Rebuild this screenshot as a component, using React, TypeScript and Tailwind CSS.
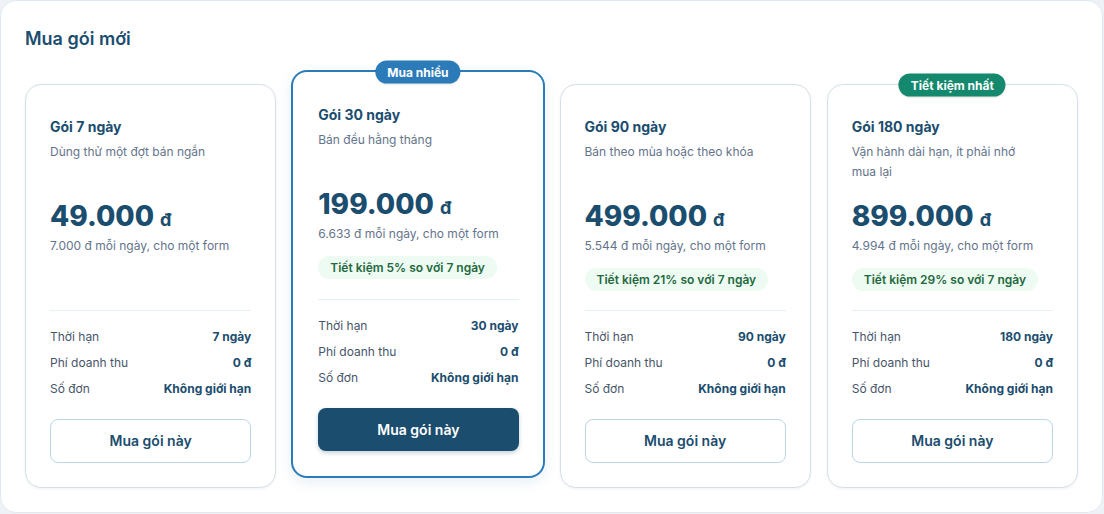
import React from "react";

type Plan = {
  name: string;
  desc: string;
  price: string;
  perDay: string;
  saving?: string;
  days: string;
  featured?: boolean;
  tag?: { text: string; className: string };
};

const plans: Plan[] = [
  {
    name: "Gói 7 ngày",
    desc: "Dùng thử một đợt bán ngắn",
    price: "49.000",
    perDay: "7.000 đ mỗi ngày, cho một form",
    days: "7 ngày",
  },
  {
    name: "Gói 30 ngày",
    desc: "Bán đều hằng tháng",
    price: "199.000",
    perDay: "6.633 đ mỗi ngày, cho một form",
    saving: "Tiết kiệm 5% so với 7 ngày",
    days: "30 ngày",
    featured: true,
    tag: { text: "Mua nhiều", className: "bg-[#2b7bb9]" },
  },
  {
    name: "Gói 90 ngày",
    desc: "Bán theo mùa hoặc theo khóa",
    price: "499.000",
    perDay: "5.544 đ mỗi ngày, cho một form",
    saving: "Tiết kiệm 21% so với 7 ngày",
    days: "90 ngày",
  },
  {
    name: "Gói 180 ngày",
    desc: "Vận hành dài hạn, ít phải nhớ mua lại",
    price: "899.000",
    perDay: "4.994 đ mỗi ngày, cho một form",
    saving: "Tiết kiệm 29% so với 7 ngày",
    days: "180 ngày",
    tag: { text: "Tiết kiệm nhất", className: "bg-[#15896d]" },
  },
];

function PlanCard({ plan }: { plan: Plan }) {
  const rows = [
    ["Thời hạn", plan.days],
    ["Phí doanh thu", "0 đ"],
    ["Số đơn", "Không giới hạn"],
  ];

  return (
    <div
      className={`relative flex flex-col rounded-2xl bg-white ${
        plan.featured
          ? "-mx-px -mt-[14px] mb-[10px] border-2 border-[#2b7bb9] pl-[25px] pr-6 pt-[33px] pb-[25px] shadow-[0_4px_14px_rgba(43,123,185,0.12)]"
          : "border border-[#d6e0ea] px-6 pt-8 pb-6 shadow-[0_1px_3px_rgba(15,40,70,0.06)]"
      }`}
    >
      {plan.tag && (
        <span
          className={`absolute left-1/2 top-0 -translate-x-1/2 -translate-y-1/2 whitespace-nowrap rounded-full px-3 h-[23px] flex items-center text-xs font-bold text-white shadow-[0_1px_2px_rgba(0,0,0,0.12)] ${plan.tag.className}`}
        >
          {plan.tag.text}
        </span>
      )}

      <h3 className="text-sm leading-5 font-bold text-[#1b4d6e]">{plan.name}</h3>
      <p className="mt-[5px] min-h-[40px] max-w-[185px] text-xs leading-5 text-[#64748b]">
        {plan.desc}
      </p>

      <div className="mt-4 flex items-baseline gap-[6px] text-[#1b4d6e]">
        <span className="text-[28px] leading-9 font-extrabold">{plan.price}</span>
        <span className="text-lg font-bold">đ</span>
      </div>
      <p className="mt-1 text-xs leading-4 text-[#64748b]">{plan.perDay}</p>

      {plan.saving && (
        <span className="mt-[14px] self-start h-[23px] flex items-center rounded-full bg-[#edfbf2] px-3 text-xs font-semibold text-[#24683f]">
          {plan.saving}
        </span>
      )}

      <div className="mt-auto pt-[19px]">
        <div className="border-t border-[#e6f1f7] pt-4 flex flex-col gap-[6px]">
          {rows.map(([label, value]) => (
            <div key={label} className="flex items-center justify-between text-xs leading-5">
              <span className="text-[#475569]">{label}</span>
              <span className="font-bold text-[#1b4d6e]">{value}</span>
            </div>
          ))}
        </div>
        <button
          className={`mt-5 w-full rounded-lg text-sm font-semibold ${
            plan.featured
              ? "h-[43px] bg-[#1b4d6e] text-white shadow-[0_2px_4px_rgba(27,77,110,0.25)]"
              : "h-[44px] border border-[#bcd6e8] bg-white text-[#1b4d6e]"
          }`}
        >
          Mua gói này
        </button>
      </div>
    </div>
  );
}

export default function App() {
  return (
    <div
      className="min-h-screen bg-[#eef2f6] pr-px"
      style={{ fontFamily: "Inter, 'Noto Sans', sans-serif" }}
    >
      <div className="rounded-2xl border border-[#e2e8f0] bg-white p-6">
        <h2 className="text-lg leading-7 font-semibold text-[#1b4d6e]">Mua gói mới</h2>
        <div className="mt-[31px] grid grid-cols-4 gap-4">
          {plans.map((plan) => (
            <PlanCard key={plan.name} plan={plan} />
          ))}
        </div>
      </div>
    </div>
  );
}
